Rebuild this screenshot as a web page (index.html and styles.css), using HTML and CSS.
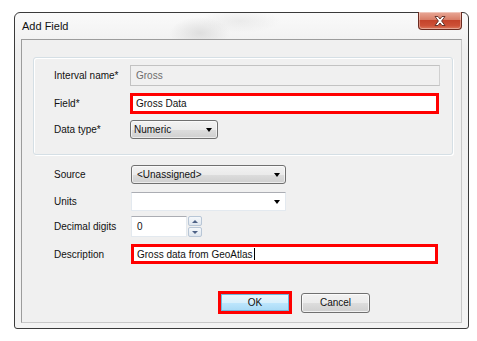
FILE: index.html
```html
<!DOCTYPE html>
<html>
<head>
<meta charset="utf-8">
<link rel="stylesheet" href="styles.css">
</head>
<body>
<div class="window">
  <div class="titlebar">
    <span class="title">Add Field</span>
    <div class="close">
      <svg width="16" height="12" viewBox="0 0 16 12">
        <path d="M3 1.5 L6 1.5 L8 4 L10 1.5 L13 1.5 L9.6 6 L13 10.5 L10 10.5 L8 8 L6 10.5 L3 10.5 L6.4 6 Z" fill="#fff" stroke="#5a2a22" stroke-width="0.9" stroke-linejoin="round"/>
      </svg>
    </div>
  </div>
  <div class="client">
    <div class="panel">
      <div class="row row-h21 row-first-top">
        <label class="lbl lbl-top">Interval name*</label>
        <div class="tb tb-disabled">Gross</div>
      </div>
      <div class="row row-h21 row-gap7">
        <label class="lbl lbl-top">Field*</label>
        <div class="tb tb-red tb-field">Gross Data</div>
      </div>
      <div class="row row-h19 row-gap6">
        <label class="lbl lbl-top">Data type*</label>
        <div class="combo combo-type">Numeric<span class="arrow"></span></div>
      </div>
    </div>
    <div class="section">
      <div class="row row-h19">
        <label class="lbl lbl-bot">Source</label>
        <div class="combo combo-wide">&lt;Unassigned&gt;<span class="arrow"></span></div>
      </div>
      <div class="row row-h19 row-gap8">
        <label class="lbl lbl-bot">Units</label>
        <div class="tb tb-combo"><span class="arrow"></span></div>
      </div>
      <div class="row row-h21 row-gap5">
        <label class="lbl lbl-bot">Decimal digits</label>
        <div class="spin">
          <div class="tb tb-num">0</div>
          <div class="spin-btns">
            <div class="spin-btn"><span class="up"></span></div>
            <div class="spin-btn"><span class="down"></span></div>
          </div>
        </div>
      </div>
      <div class="row row-h20 row-gap7">
        <label class="lbl lbl-bot">Description</label>
        <div class="tb tb-red tb-desc">Gross data from GeoAtlas<span class="caret"></span></div>
      </div>
    </div>
    <div class="buttons">
      <div class="red-ring"><div class="btn btn-default">OK</div></div>
      <div class="btn">Cancel</div>
    </div>
  </div>
</div>
</body>
</html>
```
FILE: styles.css
```css
html, body {
  margin: 0;
  padding: 0;
  background: #ffffff;
}
body {
  padding: 12px 0 0 14px;
  font-family: "Liberation Sans", Arial, sans-serif;
  font-size: 10px;
  color: #111;
}
.window {
  box-sizing: border-box;
  width: 455px;
  height: 317px;
  border: 1px solid #3a3a3a;
  border-radius: 6px 6px 3px 3px;
  background:
    radial-gradient(ellipse 30px 16px at 185px 20px, rgba(205,205,205,0.55), rgba(205,205,205,0) 100%),
    radial-gradient(ellipse 40px 12px at 225px 8px, rgba(220,220,220,0.45), rgba(220,220,220,0) 100%),
    linear-gradient(to bottom, #fafafa, #eeeeee 40px, #f3f3f3);
  padding: 0 6px 5px 6px;
  display: flex;
  flex-direction: column;
}
.titlebar {
  height: 26px;
  display: flex;
  justify-content: space-between;
  align-items: flex-start;
}
.title {
  font-size: 11px;
  color: #111;
  padding: 7px 0 0 1px;
  line-height: 12px;
}
.close {
  margin-top: -1px;
  width: 44px;
  height: 18px;
  box-sizing: border-box;
  border: 1px solid #6b2b20;
  border-top: none;
  border-radius: 0 0 4px 4px;
  background: linear-gradient(to bottom, #e9a897 0%, #d87e68 45%, #c4432b 50%, #cc5037 80%, #dc7a5e 100%);
  box-shadow: inset 0 0 0 1px rgba(255,255,255,0.35);
  display: flex;
  align-items: center;
  justify-content: center;
}
.close svg { display: block; }
.client {
  flex: 1;
  border: 1px solid #9c9c9c;
  border-right-color: #c8c8c8;
  border-bottom-color: #c8c8c8;
  background: #f0f0f0;
  display: flex;
  flex-direction: column;
}
.panel {
  margin: 17px 8px 0 11px;
  height: 98px;
  box-sizing: border-box;
  border: 1px solid #d5dfe5;
  border-radius: 3px;
  box-shadow: inset 1px 1px 0 #ffffff, 1px 1px 0 #ffffff;
  padding: 7px 13px 0 20px;
}
.section {
  padding: 10px 23px 0 32px;
}
.row {
  display: flex;
  align-items: center;
}
.row-h19 { height: 19px; }
.row-h20 { height: 20px; }
.row-h21 { height: 21px; }
.row-gap5 { margin-top: 5px; }
.row-gap6 { margin-top: 6px; }
.row-gap7 { margin-top: 7px; }
.row-gap8 { margin-top: 8px; }
.lbl {
  white-space: nowrap;
  flex: none;
}
.lbl-top { width: 76px; }
.lbl-bot { width: 77px; }
.tb {
  box-sizing: border-box;
  height: 100%;
  background: #ffffff;
  border: 1px solid #e3e9ef;
  border-top-color: #abadb3;
  display: flex;
  align-items: center;
  padding-left: 5px;
  color: #111;
  position: relative;
}
.tb-disabled {
  flex: 1;
  background: #f0f0f0;
  border: 1px solid #c2c2c2;
  border-right-color: #d0d0d0;
  color: #6d6d6d;
  margin-right: -1px;
}
.tb-field { flex: 1; }
.tb-red {
  border: 3px solid #ff0000;
  padding-left: 3px;
}
.tb-desc {
  width: 307px;
}
.caret {
  display: inline-block;
  width: 1px;
  height: 12px;
  background: #000;
  margin-left: 1px;
}
.combo {
  box-sizing: border-box;
  height: 100%;
  border: 1px solid #707070;
  border-radius: 3px;
  background: linear-gradient(to bottom, #f2f2f2 0%, #ebebeb 50%, #dddddd 51%, #cfcfcf 100%);
  box-shadow: inset 0 0 0 1px rgba(255,255,255,0.6);
  display: flex;
  align-items: center;
  padding-left: 3px;
  position: relative;
  color: #111;
}
.combo-type { width: 88px; }
.combo-wide { width: 155px; padding-left: 5px; }
.tb-combo { width: 155px; }
.arrow {
  position: absolute;
  right: 5px;
  top: 50%;
  margin-top: -2px;
  width: 0;
  height: 0;
  border-left: 3.5px solid transparent;
  border-right: 3.5px solid transparent;
  border-top: 4px solid #000;
}
.spin {
  display: flex;
  height: 21px;
  gap: 1px;
}
.tb-num {
  width: 56px;
}
.spin-btns {
  display: flex;
  flex-direction: column;
  width: 14px;
  gap: 1px;
}
.spin-btn {
  flex: 1;
  box-sizing: border-box;
  border: 1px solid #b8c6d6;
  border-radius: 2px;
  background: linear-gradient(to bottom, #f5f8fb, #dfe6ee);
  display: flex;
  align-items: center;
  justify-content: center;
}
.up {
  width: 0; height: 0;
  border-left: 3px solid transparent;
  border-right: 3px solid transparent;
  border-bottom: 3px solid #4d6185;
}
.down {
  width: 0; height: 0;
  border-left: 3px solid transparent;
  border-right: 3px solid transparent;
  border-top: 3px solid #4d6185;
}
.buttons {
  display: flex;
  align-items: center;
  gap: 9px;
  padding-left: 196px;
  margin-top: 27px;
}
.red-ring {
  border: 3px solid #ff0000;
  display: flex;
}
.btn {
  box-sizing: border-box;
  width: 69px;
  height: 20px;
  border: 1px solid #707070;
  border-radius: 3px;
  background: linear-gradient(to bottom, #f2f2f2 0%, #ebebeb 50%, #dddddd 51%, #cfcfcf 100%);
  box-shadow: inset 0 0 0 1px rgba(255,255,255,0.7);
  display: flex;
  align-items: center;
  justify-content: center;
  color: #111;
}
.btn-default {
  width: 68px;
  height: 17px;
  border: none;
  border-radius: 0;
  background: linear-gradient(to bottom, #eaf6fd 0%, #d9f0fc 50%, #bee6fd 51%, #a7d9f5 100%);
  box-shadow: inset 0 0 0 1px #6fb7dc;
}
```
